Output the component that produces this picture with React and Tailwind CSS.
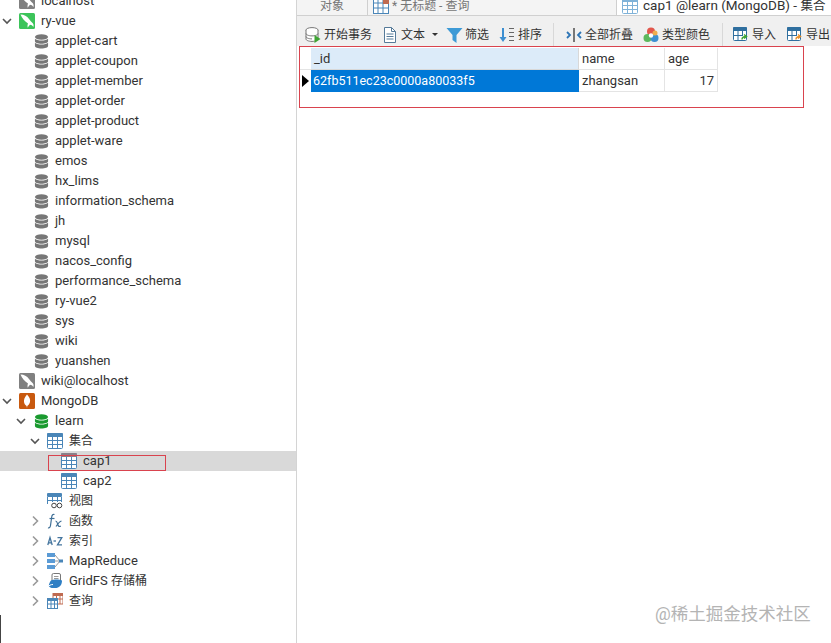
const latin = { fontFamily: 'Roboto, "Noto Sans CJK SC", sans-serif' };

const Chevron = ({ open }) => (
  <svg width="14" height="14" viewBox="0 0 14 14" fill="none" stroke={open ? "#555" : "#999"} strokeWidth="1.6">
    {open ? <path d="M3 5l4 4 4-4" /> : <path d="M5 2.500l4.500 4.500-4.500 4.500" />}
  </svg>
);

const DbIcon = ({ color = "#777" }) => (
  <svg width="15" height="15" viewBox="0 0 16 16" fill={color} className="ml-px">
    <ellipse cx="8" cy="3.200" rx="7" ry="3" />
    <path d="M1 5v2.600c0 1.500 3.100 2.700 7 2.700s7-1.200 7-2.700V5c-1.300 1.200-4 1.900-7 1.900S2.300 6.200 1 5z" />
    <path d="M1 9.400v3.300c0 1.500 3.100 2.700 7 2.700s7-1.200 7-2.700V9.400c-1.300 1.200-4 1.900-7 1.900s-5.700-.7-7-1.900z" />
  </svg>
);

const Dolphin = ({ bg }) => (
  <svg width="16" height="16" viewBox="0 0 16 16">
    <rect width="16" height="16" rx="1.500" fill={bg} />
    <path d="M1.500 1.500c3.500 0 6.500 1.500 8.500 4.500 1 1.500 2.500 3 3.800 4.300.7.800 1 2.200.6 3.700-1-1.500-2-2-3.400-2.200-1 1-1.800 2-2.200 3-.5-1.500-.3-3 .2-4.200C6 8.500 3 5.500 1.500 1.500z" fill="#fff" />
  </svg>
);

const MongoIcon = () => (
  <svg width="16" height="16" viewBox="0 0 16 16">
    <rect width="16" height="16" rx="1.500" fill="#c8590f" />
    <path d="M8 1.500c2.500 2.500 3.500 5 3 7.500-.4 2-1.700 3.200-2.700 4L8 15l-.4-2C6.500 12 5.200 11 5 9c-.3-2.500.7-5 3-7.500z" fill="#fff" />
  </svg>
);

const GridIcon = ({ head = "#4a86b8", line = "#4a86b8" }) => (
  <svg width="16" height="16" viewBox="0 0 16 16">
    <rect x=".5" y=".5" width="15" height="15" rx="1" fill="#fff" stroke={line} />
    <rect x="0" y="0" width="16" height="4" rx="1" fill={head} />
    <path d="M5.500 4v11M10.500 4v11M1 7.500h14M1 11.500h14" stroke={line} strokeWidth="1" />
  </svg>
);

const ViewIcon = () => (
  <svg width="16" height="16" viewBox="0 0 16 16">
    <rect x="0" y="0" width="15" height="4" rx="1" fill="#4a86b8" />
    <path d="M.5 4v7M5.500 4v5M10.500 4v5M14.500 4v5M1 7.500h14" stroke="#4a86b8" fill="none" />
    <circle cx="7" cy="12.500" r="2.300" fill="#fff" stroke="#444" />
    <circle cx="12.500" cy="12.500" r="2.300" fill="#fff" stroke="#444" />
  </svg>
);

const FxIcon = () => (
  <svg width="16" height="16" viewBox="0 0 16 16" fill="none" stroke="#3f6f96" strokeWidth="1.200">
    <path d="M7.500 1.500C6 1 5 1.800 4.700 4L3.500 12.500C3.200 14.500 2.200 15.200 1 14.700" />
    <path d="M2.500 5.500h5" />
    <path d="M8.500 8c1.500 0 1.500 1 2.300 3.500.6 2 1.500 2.500 3 1.500M14.500 8c-2 .5-3.500 2.500-5.500 5.500" />
  </svg>
);

const AzIcon = () => (
  <svg width="16" height="16" viewBox="0 0 16 16" fill="none" stroke="#44759e" strokeWidth="1.300">
    <path d="M.8 12L3 4.500 5.200 12M1.500 9.800h3" />
    <path d="M6.500 8h2.500" />
    <path d="M10.500 4.700h4.300L10.500 11.800h4.500" />
  </svg>
);

const MapIcon = () => (
  <svg width="16" height="16" viewBox="0 0 16 16">
    <rect x="0" y="0" width="8" height="4" fill="#5b9bd5" />
    <rect x="0" y="6" width="8" height="4" fill="#5b9bd5" />
    <rect x="0" y="12" width="8" height="4" fill="#5b9bd5" />
    <path d="M8 2l5 6-5 6M8 8h5" fill="none" stroke="#999" />
    <rect x="12" y="6.500" width="4" height="3" fill="#4a86b8" />
  </svg>
);

const GridFsIcon = () => (
  <svg width="16" height="16" viewBox="0 0 16 16">
    <rect x="5" y=".5" width="8.500" height="9" rx="1.500" fill="#fff" stroke="#777" />
    <path d="M7 3.500h4.500M7 5.500h4.500" stroke="#999" />
    <path d="M4 7.500c3-1.300 8-1.300 11 0 0 3-1 6.500-5.500 7.500C5 15.500 1 14.500 2 11.500c.4-1.500 1.200-3 2-4z" fill="#2f7fc4" />
    <path d="M1 14c1-1.500 2.500-2.500 5-2.500" fill="none" stroke="#fff" />
  </svg>
);

const QueryIcon = () => (
  <svg width="16" height="16" viewBox="0 0 16 16">
    <rect x="6" y="0" width="10" height="11" fill="#fff" stroke="#bf6a50" />
    <rect x="6" y="0" width="10" height="3" fill="#bf6a50" />
    <path d="M9.500 3v8M13 3v8M6 6h10" stroke="#bf6a50" />
    <rect x=".5" y="5.500" width="10" height="10" fill="#fff" stroke="#4a86b8" />
    <rect x="0" y="5" width="11" height="3" fill="#4a86b8" />
    <path d="M4 8v7M7.500 8v7M1 11h9" stroke="#4a86b8" />
  </svg>
);

const Row = ({ level, chevron, icon, label, selected }) => {
  const pads = ["pl-0", "pl-[14px]", "pl-[28px]", "pl-[42px]"];
  return (
    <div className={`flex h-5 items-center ${pads[level]} ${selected ? "bg-[#d9d9d9]" : ""}`}>
      <span className="flex w-[19px] shrink-0">{chevron && <Chevron open={chevron === "open"} />}</span>
      <span className="mr-[6px] flex w-4 shrink-0">{icon}</span>
      <span className="whitespace-nowrap">{label}</span>
    </div>
  );
};

const Cn = ({ children }) => <span className="text-[12px]">{children}</span>;

const databases = [
  "applet-cart", "applet-coupon", "applet-member", "applet-order", "applet-product", "applet-ware",
  "emos", "hx_lims", "information_schema", "jh", "mysql", "nacos_config", "performance_schema",
  "ry-vue2", "sys", "wiki", "yuanshen",
];

const Tool = ({ icon, label, className = "", caret }) => (
  <div className={`flex items-center whitespace-nowrap text-[12px] ${className}`}>
    <span className="mr-[3px] flex w-4 shrink-0">{icon}</span>
    <span>{label}</span>
    {caret && <span className="ml-[7px] h-0 w-0 border-x-[3px] border-t-[3px] border-x-transparent border-t-[#333]" />}
  </div>
);

const TxIcon = () => (
  <svg width="16" height="16" viewBox="0 0 16 16">
    <g fill="#fff" stroke="#777">
      <ellipse cx="7" cy="3" rx="6" ry="2.400" />
      <path d="M1 3v9c0 1.300 2.700 2.400 6 2.400S13 13.300 13 12V3" />
      <path d="M1 6.500c0 1.300 2.700 2.400 6 2.400s6-1.100 6-2.400M1 9.500c0 1.300 2.700 2.400 6 2.400" fill="none" />
    </g>
    <path d="M9.500 8l6 4-6 4z" fill="#3fa535" />
  </svg>
);

const TextIcon = () => (
  <svg width="16" height="16" viewBox="0 0 16 16" fill="#fff" stroke="#557a99">
    <path d="M2.500.5h7l4 4v11h-11z" />
    <path d="M9.500.5v4h4M4.500 7h7M4.500 9.500h7M4.500 12h7" fill="none" />
  </svg>
);

const FilterIcon = () => (
  <svg width="17" height="16" viewBox="0 0 16 16" fill="#3d9ad6" className="shrink-0">
    <path d="M0 1h16l-6 7v8l-4-3V8z" />
  </svg>
);

const SortIcon = () => (
  <svg width="16" height="16" viewBox="0 0 16 16" fill="none">
    <path d="M4 1v12" stroke="#3d8fd1" strokeWidth="2" />
    <path d="M.5 10L4 15l3.500-5z" fill="#3d8fd1" />
    <path d="M10 1.500h5M10 5.500h5M10 9.500h5M10 13.500h5" stroke="#666" />
  </svg>
);

const CollapseIcon = () => (
  <svg width="16" height="16" viewBox="0 0 16 16" fill="none">
    <path d="M1 5l3 3-3 3M15 5l-3 3 3 3" stroke="#2e75b6" strokeWidth="1.800" />
    <rect x="7" y="1" width="2" height="14" fill="#777" />
  </svg>
);

const ColorIcon = () => (
  <svg width="16" height="16" viewBox="0 0 16 16">
    <circle cx="8" cy="4.500" r="4" fill="#e2574c" />
    <circle cx="4.500" cy="11" r="4" fill="#5cb85c" />
    <circle cx="11.500" cy="11" r="4" fill="#3d8fd1" />
    <circle cx="12" cy="6" r="2.500" fill="#f0ad4e" />
    <circle cx="8" cy="8.500" r="2.200" fill="#fff" />
  </svg>
);

const TransferIcon = ({ color }) => (
  <svg width="16" height="16" viewBox="0 0 16 16">
    <rect x=".5" y=".5" width="13" height="13" rx="1" fill="#fff" stroke="#2f6f9f" />
    <rect x="0" y="0" width="14" height="4" rx="1" fill="#2f6f9f" />
    <path d="M5 4v9M9.500 4v5M1 8.500h8" stroke="#2f6f9f" />
    <path d="M9 12.500c0-2 1.500-3 4-3M11 7.500l2.500 2-2.500 2" fill="none" stroke={color} strokeWidth="1.500" />
  </svg>
);

const App = () => (
  <div className="relative flex h-[643px] w-[831px] overflow-hidden bg-white text-[13px] text-[#333]" style={latin}>
    {/* connection tree */}
    <aside className="w-[297px] shrink-0 overflow-hidden border-r border-[#d4d4d4]">
      <div className="-mt-[9px]">
        <Row level={0} icon={<Dolphin bg="#808080" />} label="localhost" />
        <Row level={0} chevron="open" icon={<Dolphin bg="#3cc45a" />} label="ry-vue" />
        {databases.map((name) => (
          <Row key={name} level={1} icon={<DbIcon />} label={name} />
        ))}
        <Row level={0} icon={<Dolphin bg="#808080" />} label="wiki@localhost" />
        <Row level={0} chevron="open" icon={<MongoIcon />} label="MongoDB" />
        <Row level={1} chevron="open" icon={<DbIcon color="#1a9a2f" />} label="learn" />
        <Row level={2} chevron="open" icon={<GridIcon />} label={<Cn>集合</Cn>} />
        <Row level={3} selected icon={<GridIcon head="#8a7f88" />} label="cap1" />
        <Row level={3} icon={<GridIcon />} label="cap2" />
        <Row level={2} icon={<ViewIcon />} label={<Cn>视图</Cn>} />
        <Row level={2} chevron="closed" icon={<FxIcon />} label={<Cn>函数</Cn>} />
        <Row level={2} chevron="closed" icon={<AzIcon />} label={<Cn>索引</Cn>} />
        <Row level={2} chevron="closed" icon={<MapIcon />} label="MapReduce" />
        <Row level={2} chevron="closed" icon={<GridFsIcon />} label={<>GridFS <Cn>存储桶</Cn></>} />
        <Row level={2} chevron="closed" icon={<QueryIcon />} label={<Cn>查询</Cn>} />
      </div>
    </aside>

    <main className="min-w-0 flex-1">
      {/* tabs, cut off by the top of the picture */}
      <div className="flex h-[16px] items-center overflow-hidden border-b border-[#d0d0d0] bg-[#f4f4f4] text-[#777]">
        <div className="flex h-full w-[71px] shrink-0 items-center justify-center border-r border-[#cfcfcf] text-[12px]">
          <span className="-mt-1">对象</span>
        </div>
        <div className="flex h-full w-[249px] shrink-0 items-center gap-[3px] border-r border-[#cfcfcf] pl-[5px] text-[12px]">
          <svg width="16" height="16" viewBox="0 0 16 16" className="-mt-1 shrink-0">
            <rect x=".5" y=".5" width="15" height="15" fill="#fff" stroke="#4a86b8" />
            <path d="M5 0v16M10 0v16M0 5h16M0 10h16" stroke="#4a86b8" />
            <rect x="10" y="0" width="6" height="6" fill="#bf6a50" />
          </svg>
          <span className="-mt-1">* 无标题 - 查询</span>
        </div>
        <div className="flex h-full flex-1 items-center gap-[5px] whitespace-nowrap bg-white pl-[5px] text-[13.5px] text-[#333]">
          <span className="-mt-1 flex shrink-0"><GridIcon head="#7fb2d8" line="#7fb2d8" /></span>
          <span className="-mt-1">cap1 @learn (MongoDB) - <span className="text-[12.5px]">集合</span></span>
        </div>
      </div>

      {/* toolbar */}
      <div className="flex h-[30px] items-center bg-[#f0f0f0] pl-[8px] pt-[7px]">
        <Tool icon={<TxIcon />} label="开始事务" />
        <Tool icon={<TextIcon />} label="文本" caret className="ml-[10px]" />
        <Tool icon={<FilterIcon />} label="筛选" className="ml-[8px]" />
        <Tool icon={<SortIcon />} label="排序" className="ml-[10px]" />
        <span className="ml-[11px] h-6 w-px bg-[#d8d8d8]" />
        <Tool icon={<CollapseIcon />} label="全部折叠" className="ml-[12px]" />
        <Tool icon={<ColorIcon />} label="类型颜色" className="ml-[10px]" />
        <span className="ml-[12px] h-6 w-px bg-[#d8d8d8]" />
        <Tool icon={<TransferIcon color="#3fa535" />} label="导入" className="ml-[10px]" />
        <Tool icon={<TransferIcon color="#e8912d" />} label="导出" className="ml-[11px]" />
      </div>

      {/* result grid */}
      <div className="relative bg-white pl-[2px] pt-[2px]">
        <div className="grid w-fit grid-cols-[12px_268px_86px_53px] grid-rows-[22px_22px]">
          <div className="border-b border-[#e4e4e4]" />
          <div className="flex items-center border-b border-r border-[#d8d8d8] bg-[#dcebf9] pl-[3px]">_id</div>
          <div className="flex items-center border-b border-r border-[#e4e4e4] pl-[3px]">name</div>
          <div className="flex items-center border-b border-r border-[#e4e4e4] pl-[3px]">age</div>
          <div className="flex items-center pl-[3px]">
            <span className="h-0 w-0 border-y-[6px] border-l-[7px] border-y-transparent border-l-black" />
          </div>
          <div className="flex items-center bg-[#0078d7] pl-[2px] text-[12.5px] text-white">62fb511ec23c0000a80033f5</div>
          <div className="flex items-center border-b border-r border-[#e4e4e4] pl-[3px]">zhangsan</div>
          <div className="flex items-center justify-end border-b border-r border-[#e4e4e4] pr-[3px]">17</div>
        </div>
      </div>
    </main>

    {/* annotation boxes drawn over the screenshot */}
    <div className="absolute left-[299px] top-[46px] h-[62px] w-[505px] border border-[#d9434e]" />
    <div className="absolute left-[48px] top-[455px] h-[16px] w-[118px] border border-[#d9434e]" />
    <div className="absolute bottom-0 left-0 h-[28px] w-px bg-[#444]" />

    <div className="absolute left-[655px] top-[601px] whitespace-nowrap text-[17.5px] text-[#b4b4b4]">@稀土掘金技术社区</div>
  </div>
);

export default App;
